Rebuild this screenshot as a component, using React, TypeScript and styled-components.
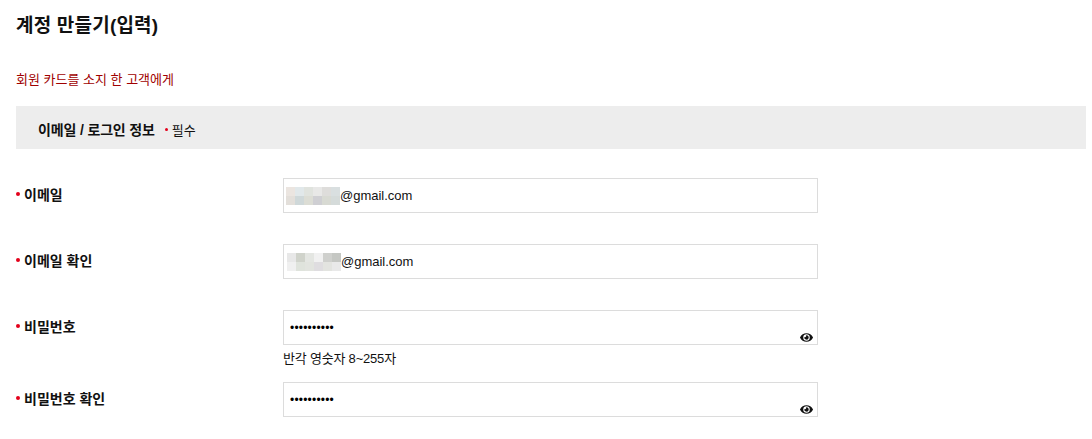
import React from "react";
import styled, { createGlobalStyle } from "styled-components";
import { FaEye } from "react-icons/fa";

const Global = createGlobalStyle`
  html, body {
    margin: 0;
    background: #fff;
    overflow: hidden;
  }
  body {
    font-family: "Liberation Sans", Arial, "Noto Sans CJK KR", sans-serif;
    color: #111;
  }
`;

const Page = styled.div`
  width: 1070px;
  height: 439px;
  padding-left: 16px;
  overflow: hidden;
`;

const Title = styled.h1`
  margin: 0;
  padding-top: 14px;
  font-size: 19px;
  line-height: 24px;
  font-weight: 700;
  letter-spacing: 0.2px;
  color: #111;
`;

const Notice = styled.p`
  margin: 34px 0 0;
  font-size: 13px;
  line-height: 16px;
  color: #a00000;
`;

const SectionBar = styled.div`
  display: flex;
  align-items: center;
  box-sizing: border-box;
  height: 43px;
  margin-top: 18px;
  padding: 4px 0 0 22px;
  background: #ededed;
`;

const SectionTitle = styled.h2`
  margin: 0 10px 0 0;
  font-size: 14px;
  line-height: 16px;
  font-weight: 700;
  letter-spacing: -0.15px;
`;

const Dot = styled.i`
  display: inline-block;
  flex: none;
  width: ${(p) => p.$size}px;
  height: ${(p) => p.$size}px;
  margin-right: ${(p) => p.$gap}px;
  border-radius: 50%;
  background: #e3001b;
`;

const RequiredNote = styled.span`
  display: flex;
  align-items: center;
  font-size: 13px;
`;

const Form = styled.div`
  display: flex;
  flex-direction: column;
  padding-top: 29px;
`;

const Row = styled.div`
  display: grid;
  grid-template-columns: 267px 535px;
  margin-bottom: ${(p) => p.$after}px;
`;

const Label = styled.label`
  display: flex;
  align-items: center;
  height: 31px;
  font-size: 14px;
  font-weight: 700;
  color: #111;
`;

const Field = styled.div`
  position: relative;
  display: flex;
  align-items: center;
  box-sizing: border-box;
  height: 35px;
  padding-left: 2px;
  border: 1px solid #dcdcdc;
  font-size: 13px;
  color: #111;
`;

const Mosaic = styled.div`
  display: grid;
  grid-template-columns: repeat(6, 9px);
  grid-auto-rows: 9px;
  margin-left: ${(p) => p.$shift}px;
`;

const Cell = styled.span`
  background: ${(p) => p.$color};
`;

const Secret = styled.span`
  padding-left: 4px;
  font-size: 12px;
  letter-spacing: 0.2px;
  color: #000;
`;

const EyeButton = styled.span`
  position: absolute;
  right: 4px;
  bottom: 0;
  display: flex;
  font-size: 13px;
  color: #111;
`;

const Hint = styled.div`
  margin-top: 7px;
  font-size: 13px;
  line-height: 14px;
  letter-spacing: -0.2px;
`;

const firstEmail = ["#ebe5e0", "#e1e8ea", "#e0e3de", "#e8e8e7", "#dedddb", "#d9dfe0", "#e3dfda", "#cfd8d9", "#dcddd5", "#cfcfd3", "#d8dad3", "#d5dbda"];
const secondEmail = ["#e8e8e8", "#d0d3cb", "#e4e6e2", "#f1f1f1", "#cfd0cd", "#c5c7c3", "#f0f0f0", "#dfe3dc", "#e2e4df", "#dfdde0", "#e3e4e0", "#e9e9e9"];

function Email({ colors, shift }: { colors: string[]; shift: number }) {
  return (
    <Field>
      <Mosaic $shift={shift}>
        {colors.map((c, i) => (
          <Cell key={i} $color={c} />
        ))}
      </Mosaic>
      @gmail.com
    </Field>
  );
}

function Password() {
  return (
    <Field>
      <Secret>••••••••••</Secret>
      <EyeButton>
        <FaEye />
      </EyeButton>
    </Field>
  );
}

export default function App() {
  return (
    <Page>
      <Global />
      <Title>계정 만들기(입력)</Title>
      <Notice>회원 카드를 소지 한 고객에게</Notice>
      <SectionBar>
        <SectionTitle>이메일 / 로그인 정보</SectionTitle>
        <RequiredNote>
          <Dot $size={3} $gap={4} />
          필수
        </RequiredNote>
      </SectionBar>
      <Form>
        <Row $after={31}>
          <Label>
            <Dot $size={4} $gap={4} />
            이메일
          </Label>
          <Email colors={firstEmail} shift={0} />
        </Row>
        <Row $after={31}>
          <Label>
            <Dot $size={4} $gap={4} />
            이메일 확인
          </Label>
          <Email colors={secondEmail} shift={1} />
        </Row>
        <Row $after={16}>
          <Label>
            <Dot $size={4} $gap={4} />
            비밀번호
          </Label>
          <div>
            <Password />
            <Hint>반각 영숫자 8~255자</Hint>
          </div>
        </Row>
        <Row $after={0}>
          <Label>
            <Dot $size={4} $gap={4} />
            비밀번호 확인
          </Label>
          <Password />
        </Row>
      </Form>
    </Page>
  );
}
